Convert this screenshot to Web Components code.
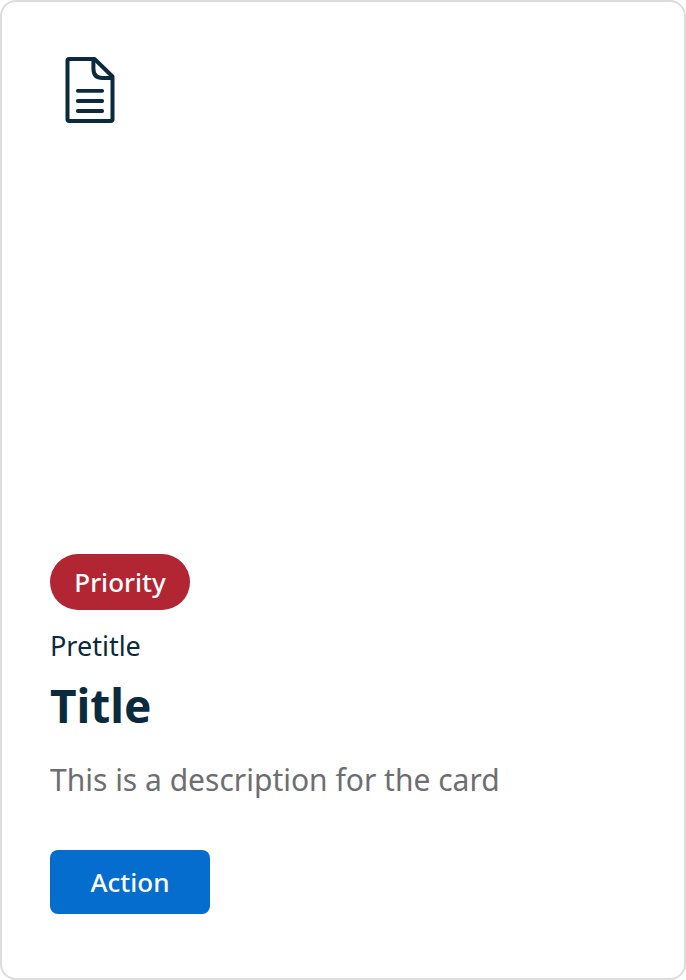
<!DOCTYPE html>
<html lang="en">
<head>
<meta charset="utf-8">
<meta name="viewport" content="width=device-width, initial-scale=1">
<title>Card</title>
<style>
body { margin: 0; background: #fff; font-family: "Noto Sans", "Open Sans", sans-serif; color: #0c2a3e; }
</style>
</head>
<body>
<action-card>
  <document-icon slot="icon"></document-icon>
  <priority-badge slot="badge">Priority</priority-badge>
  <span slot="pretitle">Pretitle</span>
  <span slot="title">Title</span>
  <span slot="description">This is a description for the card</span>
  <action-button slot="action">Action</action-button>
</action-card>
<script>
const define = (name, html) => customElements.define(name, class extends HTMLElement {
  constructor() {
    super();
    this.attachShadow({ mode: 'open' }).innerHTML = html;
  }
});

define('document-icon', `
<style>
:host { display: block; width: 80px; height: 80px; }
svg { display: block; width: 100%; height: 100%; }
</style>
<svg viewBox="0 0 80 80" fill="none" stroke="#0c2a3e" stroke-width="4" stroke-linecap="round" stroke-linejoin="round" aria-hidden="true">
  <path d="M44.5 9H19.2Q17.5 9 17.5 10.7V69.3Q17.5 71 19.2 71H60.8Q62.5 71 62.5 69.3V26.5Z"/>
  <path d="M43.4 9.5V18.5Q43.4 28 52.5 28H62"/>
  <path d="M27.8 40.8H52.2M27.8 51H52.2M27.8 61H52.2" stroke-width="3.8"/>
</svg>`);

define('priority-badge', `
<style>
:host { display: inline-block; box-sizing: border-box; min-width: 140px; text-align: center; padding: 8px 24px; border-radius: 28px; background: #b22533; color: #fff; font-size: 26px; line-height: 40px; font-weight: 500; }
</style>
<slot></slot>`);

define('action-button', `
<style>
:host { display: inline-block; }
button { display: block; box-sizing: border-box; min-width: 160px; margin: 0; border: 0; border-radius: 8px; padding: 12px 40px; background: #056dce; color: #fff; font: inherit; font-size: 26px; line-height: 40px; font-weight: 500; cursor: pointer; }
</style>
<button type="button"><slot></slot></button>`);

define('action-card', `
<style>
:host { display: flex; flex-direction: column; align-items: flex-start; box-sizing: border-box; min-height: 100vh; padding: 48px 48px 64px; border: 2px solid #dcdcdc; border-radius: 16px; background: #fff; }
.body { margin-top: auto; display: flex; flex-direction: column; align-items: flex-start; }
p, h2 { margin: 0; }
.pretitle { margin-top: 16px; font-size: 27px; line-height: 40px; }
h2 { margin-top: 8px; font-size: 46px; line-height: 62px; font-weight: 700; }
.description { margin-top: 24px; color: #6d6e71; font-size: 30px; line-height: 40px; }
.action { margin-top: 50px; }
</style>
<slot name="icon"></slot>
<div class="body">
  <slot name="badge"></slot>
  <p class="pretitle"><slot name="pretitle"></slot></p>
  <h2><slot name="title"></slot></h2>
  <p class="description"><slot name="description"></slot></p>
  <div class="action"><slot name="action"></slot></div>
</div>`);
</script>
</body>
</html>
